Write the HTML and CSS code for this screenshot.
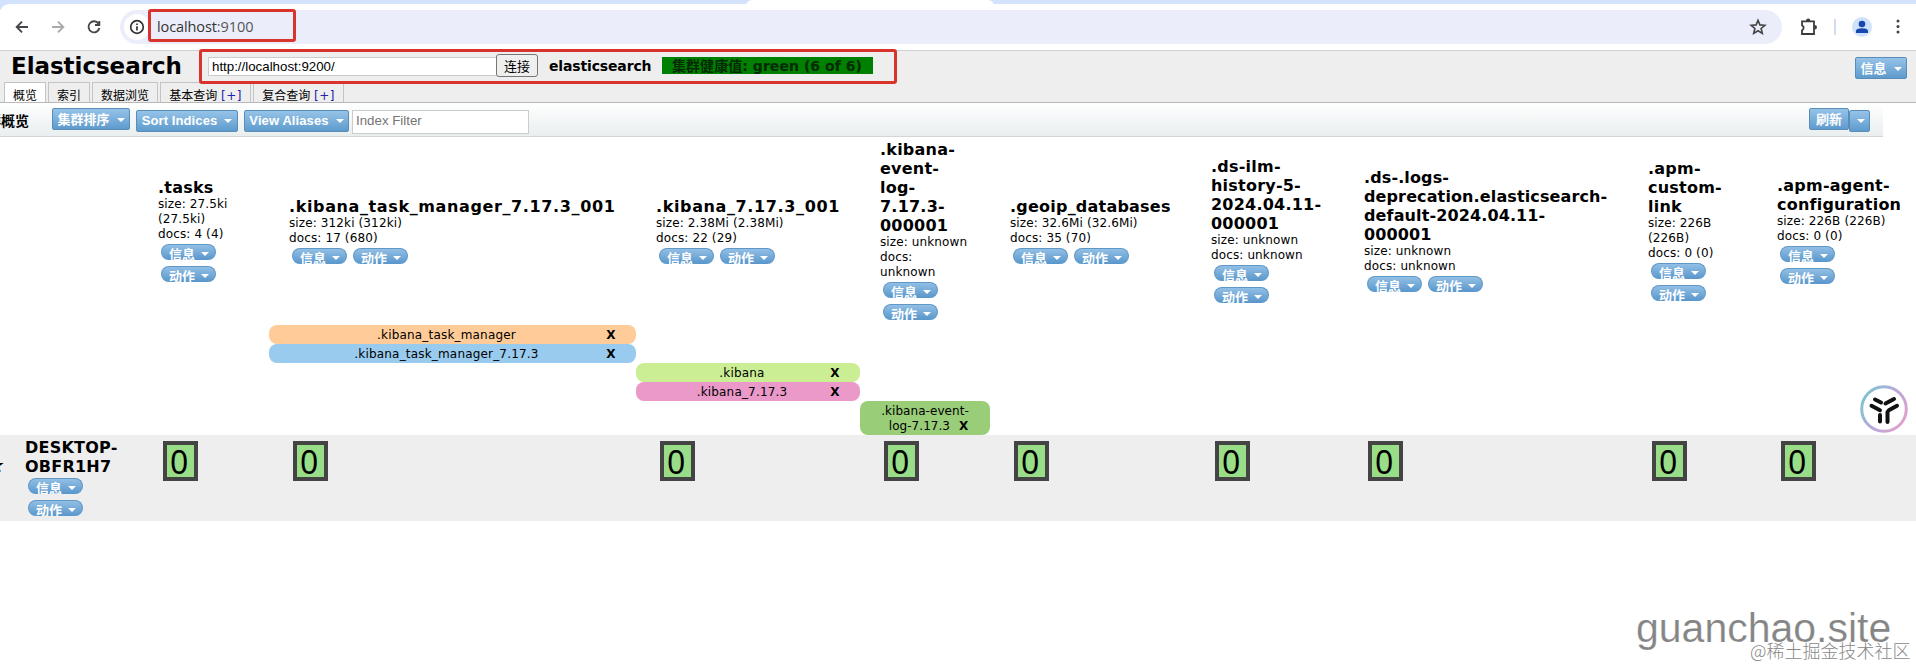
FILE: index.html
```
<!DOCTYPE html>
<html lang="zh-CN">
<head>
<meta charset="utf-8">
<title>Elasticsearch</title>
<link rel="stylesheet" href="styles.css">
</head>
<body>
<div class="tabstrip"><span class="active-tab"></span></div>
<div class="browser">
  <svg class="nav" viewBox="0 0 22 22"><path d="M17 11H6M11 5.700L5.700 11L11 16.300"/></svg>
  <svg class="nav off" viewBox="0 0 22 22"><path d="M5 11H16M11 5.700L16.300 11L11 16.300"/></svg>
  <svg class="nav" viewBox="0 0 22 22"><path d="M15.500 7.600A5.500 5.500 0 1 0 16.400 12M16.300 5V9H12"/></svg>
  <div class="address">
    <span class="site"><svg viewBox="0 0 16 16"><circle cx="8" cy="8" r="6.300"/><path d="M8 7.200V11.500M8 4.500V6"/></svg></span>
    <span class="url">localhost<span class="port">:9100</span></span>
    <svg class="star" viewBox="0 0 18 18"><path d="M9 2.300L10.900 6.900L15.900 7.300L12.100 10.500L13.300 15.400L9 12.800L4.700 15.400L5.900 10.500L2.100 7.300L7.100 6.900Z"/></svg>
  </div>
  <svg class="puzzle" viewBox="0 0 18 18"><path d="M2 3.300H14V16H2V12.400Q5.300 9.800 2 7.200Z"/><path class="solid" d="M6 3Q6 .6 8.200 .6Q10.400 .6 10.400 3ZM14.500 7Q17 7 17 9.300Q17 11.500 14.500 11.500Z"/></svg>
  <span class="divider"></span>
  <svg class="avatar" viewBox="0 0 20 20"><circle cx="10" cy="10" r="10" fill="#d0e2fb"/><circle cx="10" cy="7" r="3.300"/><path d="M4 16V14Q4 11.200 10 11.200T16 14V16Z"/></svg>
  <svg class="dots" viewBox="0 0 4 16"><circle cx="2" cy="2" r="1.500"/><circle cx="2" cy="7.500" r="1.500"/><circle cx="2" cy="13" r="1.500"/></svg>
</div>

<header class="head">
  <div class="connect">
    <h1>Elasticsearch</h1>
    <span class="uri">http://localhost:9200/</span><span class="go">连接</span>
    <span class="cluster">elasticsearch</span>
    <span class="health">集群健康值: green (6 of 6)</span>
    <span class="btn info">信息<i></i></span>
  </div>
  <nav class="tabs">
    <span class="tab on">概览</span><span class="tab t2">索引</span><span class="tab t3">数据浏览</span><span class="tab t4">基本查询 <a>[+]</a></span><span class="tab t4">复合查询 <a>[+]</a></span>
  </nav>
</header>

<div class="tools">
  <div class="caption"><span>集群概览</span></div>
  <span class="btn cn b1">集群排序<i></i></span>
  <span class="btn b2">Sort Indices<i></i></span>
  <span class="btn b3">View Aliases<i></i></span>
  <span class="filter">Index Filter</span>
  <span class="btn cn refresh">刷新</span><span class="btn more"><i></i></span>
</div>

<main class="overview">
  <div class="grid indices">
    <div></div>
    <div class="idx"><h2>.tasks</h2><p>size: 27.5ki<br>(27.5ki)<br>docs: 4 (4)</p><div class="acts col"><b>信息<i></i></b><b>动作<i></i></b></div></div>
    <div class="idx"><h2 class="wide">.kibana_task_manager_7.17.3_001</h2><p>size: 312ki (312ki)<br>docs: 17 (680)</p><div class="acts"><b>信息<i></i></b><b>动作<i></i></b></div></div>
    <div class="idx"><h2 class="wide">.kibana_7.17.3_001</h2><p>size: 2.38Mi (2.38Mi)<br>docs: 22 (29)</p><div class="acts"><b>信息<i></i></b><b>动作<i></i></b></div></div>
    <div class="idx"><h2>.kibana-<br>event-<br>log-<br>7.17.3-<br>000001</h2><p>size: unknown<br>docs:<br>unknown</p><div class="acts col"><b>信息<i></i></b><b>动作<i></i></b></div></div>
    <div class="idx"><h2>.geoip_databases</h2><p>size: 32.6Mi (32.6Mi)<br>docs: 35 (70)</p><div class="acts"><b>信息<i></i></b><b>动作<i></i></b></div></div>
    <div class="idx"><h2>.ds-ilm-<br>history-5-<br>2024.04.11-<br>000001</h2><p>size: unknown<br>docs: unknown</p><div class="acts col"><b>信息<i></i></b><b>动作<i></i></b></div></div>
    <div class="idx"><h2 class="tight">.ds-.logs-<br>deprecation.elasticsearch-<br>default-2024.04.11-<br>000001</h2><p>size: unknown<br>docs: unknown</p><div class="acts"><b>信息<i></i></b><b>动作<i></i></b></div></div>
    <div class="idx"><h2>.apm-<br>custom-<br>link</h2><p>size: 226B<br>(226B)<br>docs: 0 (0)</p><div class="acts col"><b>信息<i></i></b><b>动作<i></i></b></div></div>
    <div class="idx"><h2>.apm-agent-<br>configuration</h2><p>size: 226B (226B)<br>docs: 0 (0)</p><div class="acts col"><b>信息<i></i></b><b>动作<i></i></b></div></div>
  </div>
  <div class="grid aliases">
    <div class="alias c2 orange"><span>.kibana_task_manager</span><b>X</b></div>
    <div class="alias c2 blue"><span>.kibana_task_manager_7.17.3</span><b>X</b></div>
    <div class="alias c3 lime"><span>.kibana</span><b>X</b></div>
    <div class="alias c3 pink"><span>.kibana_7.17.3</span><b>X</b></div>
    <div class="alias c4 green"><span>.kibana-event-<br><em>log-7.17.3 <b>X</b></em></span></div>
  </div>
  <div class="grid node">
    <div class="name"><span class="master">★</span><h2>DESKTOP-<br>OBFR1H7</h2><div class="acts col"><b>信息<i></i></b><b>动作<i></i></b></div></div>
    <div class="shard first">0</div><div class="shard">0</div><div class="shard">0</div><div class="shard">0</div><div class="shard">0</div><div class="shard">0</div><div class="shard">0</div><div class="shard">0</div><div class="shard">0</div>
  </div>
</main>

<div class="mark m1"></div>
<div class="mark m2"></div>
<svg class="badge" viewBox="0 0 48 48">
  <defs><linearGradient id="ring" x1="0" y1=".2" x2="1" y2=".8"><stop offset="0" stop-color="#7cc6cc"/><stop offset=".5" stop-color="#b5a9dc"/><stop offset="1" stop-color="#e5a0c8"/></linearGradient></defs>
  <circle cx="24" cy="24" r="22.300" fill="#fff" stroke="url(#ring)" stroke-width="3"/>
  <path d="M15 14.500L21 17.500M11.500 20.800L20 25.300M25.500 18.500L34 14M28.800 25.200L37 20.800M20 30V36.500M27.500 37V27"/>
</svg>
<div class="watermark">guanchao.site</div>
<div class="community">@稀土掘金技术社区</div>
</body>
</html>
```

FILE: styles.css
```
* { box-sizing: border-box; }
body { margin: 0; width: 1916px; height: 666px; overflow: hidden; position: relative; background: #fff; color: #000; font-family: "DejaVu Sans", "Noto Sans CJK SC", sans-serif; font-size: 12px; }
h1, h2, p { margin: 0; }
i { display: inline-block; border: 4px solid transparent; border-top-color: #fff; border-bottom: 0; }
em { font-style: normal; }

.tabstrip { height: 10px; background: #d3e3fd; margin-bottom: -6px; padding-left: 746px; }
.active-tab { display: block; width: 248px; height: 10px; background: #fff; border-radius: 6px 6px 0 0; }
.browser { position: relative; height: 46px; background: #fff; border-radius: 9px 0 0 0; padding: 6px 15px 6px 11px; display: flex; align-items: center; }
.nav { width: 22px; height: 22px; margin-right: 14px; fill: none; stroke: #45474a; stroke-width: 1.900; }
.nav.off { stroke: #aaa; }
.address { width: 1662px; height: 34px; border-radius: 17px; background: #ebeefa; display: flex; align-items: center; margin-left: 1px; padding: 0 16px 0 4px; }
.site { width: 26px; height: 26px; border-radius: 13px; background: #fff; padding: 5px; }
.site svg { display: block; width: 16px; height: 16px; fill: none; stroke: #333; stroke-width: 1.700; }
.url { margin-left: 7px; font: 14.500px/20px "Open Sans", "Noto Sans", sans-serif; letter-spacing: -.1px; color: #333; flex: 1; }
.port { color: #555; }
.star { width: 18px; height: 18px; margin-right: -1px; fill: none; stroke: #444; stroke-width: 1.600; }
.puzzle { width: 18px; height: 18px; margin-left: 18px; fill: none; stroke: #3c3c3c; stroke-width: 1.800; }
.puzzle .solid { fill: #3c3c3c; stroke: none; }
.divider { width: 2px; height: 16px; background: #d3dcec; margin: 0 16px 0 16px; }
.avatar { width: 20px; height: 20px; fill: #1848ad; }
.dots { width: 4px; height: 16px; margin-left: 24px; fill: #444; }

.head { height: 53px; background: #eee; border-top: 1px solid #d0d0d0; border-bottom: 1px solid #b8b8b8; }
.connect { display: flex; height: 31px; padding: 3px 9px 0 11px; align-items: flex-start; }
h1 { width: 197px; font-size: 23px; line-height: 25px; letter-spacing: -.05px; white-space: nowrap; }
.uri { width: 289px; height: 19px; margin-top: 3px; border: 1px solid #ccc; background: #fff; padding-left: 3px; font: 13.300px/17px "Liberation Sans", Arial, sans-serif; }
.go { width: 42px; height: 23px; margin-left: -1px; border: 1px solid #767676; border-radius: 3px; background: #efefef; font: 13px/22px "Noto Sans CJK SC", sans-serif; text-align: center; }
.cluster { width: 113px; margin-left: 11px; font-weight: bold; font-size: 14px; line-height: 24px; letter-spacing: -.15px; }
.health { width: 211px; height: 17px; margin-top: 3px; padding-left: 10px; background: #008000; font-weight: bold; font-size: 14px; line-height: 18px; letter-spacing: .05px; white-space: nowrap; color: #052a05; }
.btn { display: flex; align-items: center; justify-content: center; height: 22px; border: 1px solid #5a8cb8; border-radius: 2px; background: linear-gradient(#96c3e8, #5e9bcd); color: #fff; font: bold 13px/20px "Liberation Sans", "Noto Sans CJK SC", sans-serif; white-space: nowrap; }
.btn i { margin-left: 7px; }
.info { width: 52px; margin-left: auto; margin-top: 3px; padding-top: 2px; }
.cn { padding-top: 2px; }
.tabs { display: flex; gap: 2px; padding-left: 4px; height: 20px; }
.tab { height: 20px; border: 1px solid #c4c4c4; border-bottom: 0; text-align: center; font: 12px/27px "DejaVu Sans", "Noto Sans CJK SC", sans-serif; overflow: hidden; white-space: nowrap; width: 42px; }
.tab.on { background: #fff; }
.t3 { width: 66px; }
.t4 { width: 91px; }
.tab a { color: #22a; letter-spacing: .5px; }

.tools { width: 1883px; height: 34px; display: flex; padding: 5px 13px 0 0; background: linear-gradient(#fff, #e9eeef); border-bottom: 1px solid #d3d6d8; }
.caption { width: 52px; }
.caption span { display: block; margin-left: -27px; font: bold 14px/24px "Noto Sans CJK SC", sans-serif; white-space: nowrap; }
.b1 { width: 78px; }
.b2 { width: 102px; margin: 2px 0 0 6px; }
.b3 { width: 105px; margin: 2px 0 0 6px; }
.b2, .b3 { letter-spacing: .1px; }
.filter { width: 177px; height: 24px; margin: 2px 0 0 3px; padding-left: 3px; background: #fff; border: 1px solid #ccc; color: #757575; font: 13.300px/20px "Liberation Sans", Arial, sans-serif; }
.refresh { width: 40px; margin-left: auto; }
.more { width: 21px; margin-top: 2px; }
.more i { margin-left: 2px; }

.grid { display: grid; grid-template-columns: 138px 131px 367px 224px 130px 201px 153px 284px 129px 159px; }
.indices { height: 188px; align-items: center; }
.idx { padding: 1px 0 3px 20px; white-space: nowrap; }
h2 { font-size: 16px; line-height: 19px; letter-spacing: .22px; white-space: nowrap; }
.wide { letter-spacing: .62px; }
.tight { letter-spacing: .12px; }
p { font-size: 12px; line-height: 15px; letter-spacing: .12px; }
.acts { display: flex; gap: 6px; padding: 2px 0 0 3px; }
.acts.col { flex-direction: column; }
.acts b { display: flex; align-items: center; width: 55px; height: 16px; padding: 2px 7px 0; border: 1px solid #5f97c6; border-bottom: 0; border-radius: 8px; background: linear-gradient(#92bfe5, #5896cb); color: #fff; font: bold 13px/15px "Noto Sans CJK SC", sans-serif; overflow: hidden; white-space: nowrap; }
.acts b i { margin: 1px 0 0 6px; flex: none; }

.aliases { grid-template-rows: 19px 19px 19px 19px 34px; }
.alias { border-radius: 8px; display: flex; line-height: 20px; letter-spacing: .18px; text-align: center; }
.alias span { flex: 1; padding-left: 30px; }
.alias > b { width: 34px; margin-right: 8px; text-align: center; }
.c2 { grid-column: 3; }
.c3 { grid-column: 4; }
.c4 { grid-column: 5; }
.c2.orange { grid-row: 1; }
.c2.blue { grid-row: 2; }
.c3.lime { grid-row: 3; }
.c3.pink { grid-row: 4; }
.c4.green { grid-row: 5; line-height: 15px; letter-spacing: .05px; padding-top: 3px; }
.alias.green span { padding-left: 0; }
.green em { padding-left: 7px; }
.green b { margin-left: 5px; }
.orange { background: #fc9; }
.blue { background: #99cbee; }
.lime { background: #cbee95; }
.pink { background: #eb99c9; }
.green { background: #99cd78; }

.node { height: 86px; background: #eee; }
.name { position: relative; padding: 3px 0 0 25px; }
.name .acts { padding-top: 2px; }
.master { position: absolute; left: -13px; top: 18px; font-size: 20px; line-height: 24px; }
.shard { width: 35px; height: 40px; margin: 6px 0 0 24px; border: 4px solid #444; background: #9d8; font: 32px/33px "Noto Sans", sans-serif; text-indent: 3px; }
.shard.first { margin-left: 25px; }

.mark { position: absolute; border: 3px solid #d9342b; border-radius: 3px; }
.m1 { left: 148px; top: 9px; width: 148px; height: 33px; }
.m2 { left: 199px; top: 49px; width: 698px; height: 35px; }
.badge { position: absolute; left: 1860px; top: 385px; width: 48px; height: 48px; fill: none; stroke: #111; stroke-width: 4; stroke-linecap: round; }
.watermark { position: absolute; left: 1636px; top: 605px; font: 41px/46px "Liberation Sans", Arial, sans-serif; color: #858585; -webkit-text-stroke: .2px #fff; white-space: nowrap; }
.community { position: absolute; left: 1750px; top: 637px; font: 300 18px/26px "Noto Sans CJK SC", sans-serif; color: #888; text-shadow: 0 0 1px #fff, 1px 1px 0 #fff; white-space: nowrap; }
```
